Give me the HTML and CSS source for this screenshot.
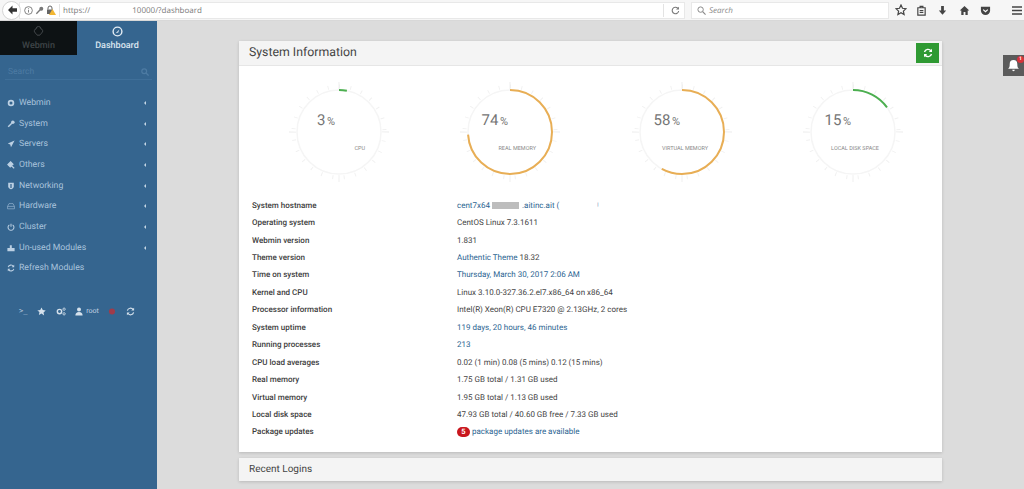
FILE: index.html
```html
<!DOCTYPE html>
<html lang="en">
<head>
<meta charset="utf-8">
<title>Dashboard</title>
<link rel="stylesheet" href="styles.css">
</head>
<body>
<header class="browser">
  <div class="back"><svg width="12" height="12" viewBox="0 0 12 12"><path d="M6.500 1.500 2 6l4.500 4.500V7.800H11V4.200H6.500z" fill="#333"/></svg></div>
  <div class="urlbar">
    <svg class="ub-icon" width="9" height="9" viewBox="0 0 10 10"><circle cx="5" cy="5" r="4.300" fill="none" stroke="#777"/><path d="M5 4.300v3M5 2.500v1" stroke="#777"/></svg>
    <svg class="ub-icon" width="9" height="9" viewBox="0 0 10 10"><circle cx="7" cy="3" r="2.200" fill="#777"/><path d="M6 4 1.500 8.500" stroke="#777" stroke-width="1.500"/></svg>
    <svg class="ub-icon" width="10" height="10" viewBox="0 0 10 10"><path d="M2 4.500V3a2 2 0 0 1 4 0v1.500" fill="none" stroke="#666"/><rect x="1" y="4.500" width="6" height="4.500" fill="#666"/><path d="M6.500 4 10 10H3z" fill="#f2b632"/></svg>
    <span class="ub-sep"></span>
    <span class="url-a">https://</span><span class="url-b">10000/?dashboard</span>
    <span class="ub-fill"></span>
    <span class="ub-sep"></span>
    <svg class="reload" width="9" height="9" viewBox="0 0 10 10"><path d="M8.500 5.500A3.600 3.600 0 1 1 7.500 2.500" fill="none" stroke="#777" stroke-width="1.200"/><path d="M8.800 .8v3.200H5.600z" fill="#777"/></svg>
  </div>
  <div class="searchbar">
    <svg width="9" height="9" viewBox="0 0 10 10"><circle cx="4" cy="4" r="3" fill="none" stroke="#888" stroke-width="1.100"/><path d="M6.300 6.300 9.500 9.500" stroke="#888" stroke-width="1.300"/></svg>
    <span>Search</span>
  </div>
  <div class="tools">
    <svg width="12" height="12" viewBox="0 0 12 12"><path d="M6 1l1.500 3.300 3.500.4-2.600 2.400.7 3.500L6 8.800l-3.100 1.800.7-3.500L1 4.700l3.500-.4z" fill="none" stroke="#444" stroke-width="1.200"/></svg>
    <svg class="t-clip" width="11" height="11" viewBox="0 0 12 12"><path d="M2 3h8v8H2zM4.500 3V1.500h3V3M4 6h4M4 8h4" fill="none" stroke="#444" stroke-width="1.300"/></svg>
    <svg width="11" height="11" viewBox="0 0 12 12"><path d="M4.500 1h3v5H10L6 10.500 2 6h2.500z" fill="#444"/></svg>
    <svg width="11" height="11" viewBox="0 0 12 12"><path d="M6 1 .8 6H2.500v5h2.500V7.500h2V11h2.500V6h1.700z" fill="#444"/></svg>
    <svg width="11" height="11" viewBox="0 0 12 12"><path d="M1 2h10v4a5 5 0 0 1-10 0z" fill="#444"/><path d="M3.500 5 6 7.300 8.500 5" fill="none" stroke="#fff" stroke-width="1.300"/></svg>
    <svg class="burger" width="12" height="11" viewBox="0 0 12 11"><path d="M1 2h10M1 5.500h10M1 9h10" stroke="#444" stroke-width="1.700"/></svg>
  </div>
</header>

<div class="app">
  <aside class="sidebar">
    <div class="tabs">
      <div class="tab tab-dark">
        <svg width="11" height="11" viewBox="0 0 12 12"><path d="M3.500 3a2.500 2.500 0 0 1 5 0 2.500 2.500 0 0 1 1 4.500c-.5 1.500-1.500 1-2 2.500h-3c-.5-1.500-1.500-1-2-2.500a2.500 2.500 0 0 1 1-4.500z" fill="none" stroke="#4a4f52" stroke-width="1"/></svg>
        <span>Webmin</span>
      </div>
      <div class="tab tab-active">
        <svg width="11" height="11" viewBox="0 0 12 12"><circle cx="6" cy="6" r="4.800" fill="none" stroke="#e6eef5" stroke-width="1.500"/><path d="M4 8 8 3.800 6.800 7z" fill="#e6eef5"/></svg>
        <span>Dashboard</span>
      </div>
    </div>
    <div class="side-search">
      <span>Search</span>
      <svg width="8" height="8" viewBox="0 0 10 10"><circle cx="4" cy="4" r="3" fill="none" stroke="#4d7ba3" stroke-width="1.500"/><path d="M6.300 6.300 9.500 9.500" stroke="#4d7ba3" stroke-width="1.600"/></svg>
    </div>
    <nav class="menu">
      <a class="item"><svg class="mi" viewBox="0 0 10 10"><circle cx="5" cy="5" r="3" fill="none" stroke="#bcd0e3" stroke-width="2.200"/></svg><span>Webmin</span><i class="caret"></i></a>
      <a class="item"><svg class="mi" viewBox="0 0 10 10"><circle cx="7.300" cy="2.700" r="2.200" fill="#bcd0e3"/><path d="M6 4 1.500 8.500" stroke="#bcd0e3" stroke-width="1.800"/></svg><span>System</span><i class="caret"></i></a>
      <a class="item"><svg class="mi" viewBox="0 0 10 10"><path d="M9.500.5 1 4.500l3 1.200L5 9z" fill="#bcd0e3"/></svg><span>Servers</span><i class="caret"></i></a>
      <a class="item"><svg class="mi" viewBox="0 0 10 10"><path d="M1 4.500 4.500 1l3 3-3.500 3.500zM5.500 6 9 9" fill="#bcd0e3" stroke="#bcd0e3" stroke-width="1.400"/></svg><span>Others</span><i class="caret"></i></a>
      <a class="item"><svg class="mi" viewBox="0 0 10 10"><path d="M1.500 1h7v4.500c0 2-2 3-3.500 3.500-1.500-.5-3.500-1.500-3.500-3.500z" fill="#bcd0e3"/><path d="M5 2.500v5" stroke="#35658f" stroke-width="1.600"/></svg><span>Networking</span><i class="caret"></i></a>
      <a class="item"><svg class="mi" viewBox="0 0 10 10"><path d="M2.500 2h5L9.300 5.500V8.500H.7V5.500zM.7 5.500h8.600" fill="none" stroke="#9dbad4" stroke-width=".8"/></svg><span>Hardware</span><i class="caret"></i></a>
      <a class="item"><svg class="mi" viewBox="0 0 10 10"><path d="M3 2.300a3.700 3.700 0 1 0 4 0" fill="none" stroke="#bcd0e3" stroke-width="1.300"/><path d="M5 .8v4" stroke="#bcd0e3" stroke-width="1.300"/></svg><span>Cluster</span><i class="caret"></i></a>
      <a class="item"><svg class="mi" viewBox="0 0 10 10"><path d="M.5 5h3V1.500h2.500V5h3.500v4H.5z" fill="#bcd0e3"/></svg><span>Un-used Modules</span><i class="caret"></i></a>
      <a class="item"><svg class="mi" viewBox="0 0 10 10"><path d="M1.500 4a3.600 3.600 0 0 1 6.500-1M8.500 6a3.600 3.600 0 0 1-6.500 1" fill="none" stroke="#bcd0e3" stroke-width="1.300"/><path d="M9 .8V4H5.800zM1 9.200V6h3.200z" fill="#bcd0e3"/></svg><span>Refresh Modules</span></a>
    </nav>
    <div class="side-tools">
      <span class="st-term">&gt;_</span>
      <svg width="9" height="9" viewBox="0 0 12 12"><path d="M6 .5l1.700 3.600 3.900.5-2.900 2.700.8 3.900L6 8.800l-3.500 1.900.8-3.900L.4 4.600l3.900-.5z" fill="#d5e1ec"/></svg>
      <svg width="10" height="9" viewBox="0 0 12 10"><circle cx="4.200" cy="5" r="2.600" fill="none" stroke="#d5e1ec" stroke-width="1.700"/><circle cx="9.700" cy="2.200" r="1.400" fill="none" stroke="#d5e1ec"/><circle cx="9.700" cy="7.800" r="1.400" fill="none" stroke="#d5e1ec"/></svg>
      <span class="st-user"><svg width="8" height="9" viewBox="0 0 10 11"><circle cx="5" cy="3" r="2.500" fill="#d5e1ec"/><path d="M.5 10.500c0-3 1.500-4.500 4.500-4.500s4.500 1.500 4.500 4.500z" fill="#d5e1ec"/></svg>root</span>
      <svg width="8" height="9" viewBox="0 0 10 10"><circle cx="5" cy="5" r="3.800" fill="#a03b4a"/></svg>
      <svg width="9" height="9" viewBox="0 0 10 10"><path d="M1.500 4a3.600 3.600 0 0 1 6.500-1M8.500 6a3.600 3.600 0 0 1-6.500 1" fill="none" stroke="#d5e1ec" stroke-width="1.300"/><path d="M9 .8V4H5.800zM1 9.200V6h3.200z" fill="#d5e1ec"/></svg>
    </div>
  </aside>

  <main class="content">
    <section class="panel">
      <div class="panel-head">
        <h2>System Information</h2>
        <button class="refresh"><svg width="10" height="10" viewBox="0 0 10 10"><path d="M1.500 4a3.600 3.600 0 0 1 6.500-1M8.500 6a3.600 3.600 0 0 1-6.500 1" fill="none" stroke="#fff" stroke-width="1.400"/><path d="M9 .8V4H5.800zM1 9.200V6h3.200z" fill="#fff"/></svg></button>
      </div>
      <div class="panel-body">
        <div class="gauges">
          <svg class="gauge" viewBox="0 0 110 110" width="110" height="110">
            <circle class="g-ticks" cx="55" cy="55" r="45.500" pathLength="360" />
            <circle class="g-majors" cx="55" cy="55" r="46.500" pathLength="360" />
            <circle class="g-track" cx="55" cy="55" r="42"/>
            <circle class="g-arc g-ok" cx="55" cy="55" r="42" pathLength="100" stroke-dasharray="3 100"/>
            <text class="g-val" x="51" y="48">3<tspan class="g-pct" dx="1.500">%</tspan></text>
            <text class="g-lab" x="81" y="73">CPU</text>
          </svg>
          <svg class="gauge" viewBox="0 0 110 110" width="110" height="110">
            <circle class="g-ticks" cx="55" cy="55" r="45.500" pathLength="360" />
            <circle class="g-majors" cx="55" cy="55" r="46.500" pathLength="360" />
            <circle class="g-track" cx="55" cy="55" r="42"/>
            <circle class="g-arc g-warn" cx="55" cy="55" r="42" pathLength="100" stroke-dasharray="74 100"/>
            <text class="g-val" x="53" y="48">74<tspan class="g-pct" dx="1.500">%</tspan></text>
            <text class="g-lab" x="81" y="73">REAL MEMORY</text>
          </svg>
          <svg class="gauge" viewBox="0 0 110 110" width="110" height="110">
            <circle class="g-ticks" cx="55" cy="55" r="45.500" pathLength="360" />
            <circle class="g-majors" cx="55" cy="55" r="46.500" pathLength="360" />
            <circle class="g-track" cx="55" cy="55" r="42"/>
            <circle class="g-arc g-warn" cx="55" cy="55" r="42" pathLength="100" stroke-dasharray="58 100"/>
            <text class="g-val" x="53" y="48">58<tspan class="g-pct" dx="1.500">%</tspan></text>
            <text class="g-lab" x="81" y="73">VIRTUAL MEMORY</text>
          </svg>
          <svg class="gauge" viewBox="0 0 110 110" width="110" height="110">
            <circle class="g-ticks" cx="55" cy="55" r="45.500" pathLength="360" />
            <circle class="g-majors" cx="55" cy="55" r="46.500" pathLength="360" />
            <circle class="g-track" cx="55" cy="55" r="42"/>
            <circle class="g-arc g-ok" cx="55" cy="55" r="42" pathLength="100" stroke-dasharray="15 100"/>
            <text class="g-val" x="53" y="48">15<tspan class="g-pct" dx="1.500">%</tspan></text>
            <text class="g-lab" x="81" y="73">LOCAL DISK SPACE</text>
          </svg>
        </div>
        <div class="info">
          <div class="k">System hostname</div><div class="v"><a>cent7x64</a><span class="redact"></span><a>.aitinc.ait (</a><span class="blank"></span><a class="tick">|</a></div>
          <div class="k">Operating system</div><div class="v">CentOS Linux 7.3.1611</div>
          <div class="k">Webmin version</div><div class="v">1.831</div>
          <div class="k">Theme version</div><div class="v"><a>Authentic Theme</a> 18.32</div>
          <div class="k">Time on system</div><div class="v"><a>Thursday, March 30, 2017 2:06 AM</a></div>
          <div class="k">Kernel and CPU</div><div class="v">Linux 3.10.0-327.36.2.el7.x86_64 on x86_64</div>
          <div class="k">Processor information</div><div class="v">Intel(R) Xeon(R) CPU E7320 @ 2.13GHz, 2 cores</div>
          <div class="k">System uptime</div><div class="v"><a>119 days, 20 hours, 46 minutes</a></div>
          <div class="k">Running processes</div><div class="v"><a>213</a></div>
          <div class="k">CPU load averages</div><div class="v">0.02 (1 min) 0.08 (5 mins) 0.12 (15 mins)</div>
          <div class="k">Real memory</div><div class="v">1.75 GB total / 1.31 GB used</div>
          <div class="k">Virtual memory</div><div class="v">1.95 GB total / 1.13 GB used</div>
          <div class="k">Local disk space</div><div class="v">47.93 GB total / 40.60 GB free / 7.33 GB used</div>
          <div class="k">Package updates</div><div class="v"><b class="pill">5</b><a>package updates are available</a></div>
        </div>
      </div>
    </section>
    <section class="panel panel-closed">
      <div class="panel-head"><h3>Recent Logins</h3></div>
    </section>
  </main>
  <div class="bell">
    <svg width="13" height="13" viewBox="0 0 12 12"><path d="M6 1a3.500 3.500 0 0 1 3.500 3.500c0 3 .5 3.500 1.500 4.500H1c1-1 1.500-1.500 1.500-4.500A3.500 3.500 0 0 1 6 1zM4.800 10h2.400a1.200 1.200 0 0 1-2.400 0z" fill="#fff"/></svg>
    <b>1</b>
  </div>
</div>
</body>
</html>
```
FILE: styles.css
```css
* { box-sizing: border-box; }
html, body { margin: 0; height: 100%; overflow: hidden; }
body { font-family: Roboto, "Liberation Sans", sans-serif; background: #dcdcdc; color: #333; text-rendering: geometricPrecision; }

.browser { height: 21px; background: #f6f6f6; border-bottom: 1px solid #d8d8d8; display: flex; align-items: center; padding-left: 2px; font-family: "Open Sans", "Liberation Sans", sans-serif; }
.back { width: 19px; height: 19px; border-radius: 50%; background: #fff; border: 1px solid #d5d5d5; display: flex; align-items: center; justify-content: center; flex: none; position: relative; z-index: 1; }
.urlbar { width: 666px; height: 17px; margin-left: -2px; background: #fff; border: 1px solid #e8e8e8; display: flex; align-items: center; padding-left: 4px; gap: 2px; font-size: 8px; color: #7a7a7a; }
.ub-sep { width: 1px; height: 13px; background: #e3e3e3; margin: 0 1px; }
.url-b { margin-left: 40px; }
.ub-fill { flex: 1; }
.reload { margin: 0 4px; }
.searchbar { width: 198px; height: 17px; margin-left: 6px; background: #fff; border: 1px solid #e8e8e8; display: flex; align-items: center; gap: 3px; padding-left: 5px; font-size: 8px; font-style: italic; color: #8a8a8a; }
.tools { flex: 1; display: flex; align-items: center; padding-left: 6px; gap: 10.500px; }
.t-clip { margin-left: -2px; }
.burger { margin-left: 9px; }

.app { display: flex; height: 468px; position: relative; }
.sidebar { width: 157px; flex: none; background: #35658f; color: #a9c3dc; font-size: 8.700px; }
.tabs { display: flex; height: 34px; }
.tab { display: flex; flex-direction: column; align-items: center; justify-content: center; gap: 4px; font-weight: 500; font-size: 9px; }
.tab-dark { width: 77px; background: #0d1214; color: #3e4447; }
.tab-active { flex: 1; color: #dbe6f0; }
.side-search { margin: 0 5px; height: 25px; border-bottom: 1px solid #3f6f99; display: flex; align-items: center; justify-content: space-between; padding: 10px 3px 0; color: #4d7ba3; font-size: 8.500px; }
.menu { display: flex; flex-direction: column; padding-top: 12.500px; }
.item { height: 20.700px; display: flex; align-items: center; padding: 0 11px 0 7px; gap: 4px; }
.mi { width: 8px; height: 8px; flex: none; }
.item span { flex: 1; }
.caret { width: 0; height: 0; border: 2.500px solid transparent; border-right-color: #c6d7e6; border-left: 0; }
.side-tools { display: flex; align-items: center; margin-top: 24.500px; padding-left: 19px; gap: 9.600px; color: #c2d3e3; font-size: 7px; height: 16px; }
.st-term { font-family: "DejaVu Sans Mono", monospace; font-size: 7px; }
.st-user { display: flex; align-items: center; gap: 3px; }

.content { flex: 1; padding: 20px 82px 0; }
.panel { background: #fff; box-shadow: 0 1px 3px rgba(0,0,0,.16); }
.panel-head { height: 25px; background: #f4f4f4; border-bottom: 1px solid #e6e6e6; display: flex; align-items: center; justify-content: space-between; padding: 0 3px 0 10px; }
.panel-head h2 { margin: 0; font-size: 12.300px; font-weight: 400; color: #444; }
.panel-head h3 { margin: 0; font-size: 10px; font-weight: 400; color: #444; }
.refresh { width: 23px; height: 20px; border: 0; padding: 0; background: #2f9a33; display: flex; align-items: center; justify-content: center; }
.panel-body { height: 386px; padding-left: 13px; }
.panel-closed { margin-top: 6px; }
.panel-closed .panel-head { height: 23px; border-bottom: 0; }

.gauges { display: grid; grid-template-columns: repeat(4, 171.300px); padding-top: 11px; height: 130.500px; justify-items: center; margin-left: 1.500px; }
.gauge { display: block; }
.g-track { fill: none; stroke: #f5f5f5; stroke-width: 1.500px; }
.g-ticks { fill: none; stroke: #f1f1f1; stroke-width: 4px; stroke-dasharray: 1.200 13.200; transform: rotate(-90deg); transform-origin: 55px 55px; }
.g-majors { fill: none; stroke: #ebebeb; stroke-width: 7px; stroke-dasharray: 1 89; transform: rotate(-90.500deg); transform-origin: 55px 55px; }
.g-arc { fill: none; stroke-width: 2px; transform: rotate(-90deg); transform-origin: 55px 55px; }
.g-ok { stroke: #4caf50; }
.g-warn { stroke: #e8ae55; }
.g-val { font-size: 15px; fill: #757575; text-anchor: end; }
.g-pct { font-size: 11px; }
.g-lab { font-size: 5.500px; fill: #8a8a8a; text-anchor: end; }

.info { display: grid; grid-template-columns: 205px 1fr; grid-auto-rows: 17.450px; align-items: center; font-size: 8px; }
.k { font-weight: 500; color: #3d3d3d; }
.v { color: #444; display: flex; align-items: center; white-space: pre-wrap; }
.v a { color: #2c6592; }
.redact { width: 27px; height: 7px; background: #bdbdbd; margin: 0 3px 0 2px; }
.blank { width: 38px; }
.tick { font-size: 5px; }
.pill { background: #c9171e; color: #fff; border-radius: 7px; width: 13px; height: 10px; display: flex; align-items: center; justify-content: center; font-size: 7.500px; margin-right: 2px; }

.bell { position: absolute; right: 0; top: 34px; width: 21px; height: 21px; background: #5b5b5b; display: flex; align-items: center; justify-content: center; }
.bell b { position: absolute; top: 1px; right: 0; width: 7px; height: 7px; border-radius: 50%; background: #d9333a; color: #fff; font-size: 5px; line-height: 7px; text-align: center; }
```
